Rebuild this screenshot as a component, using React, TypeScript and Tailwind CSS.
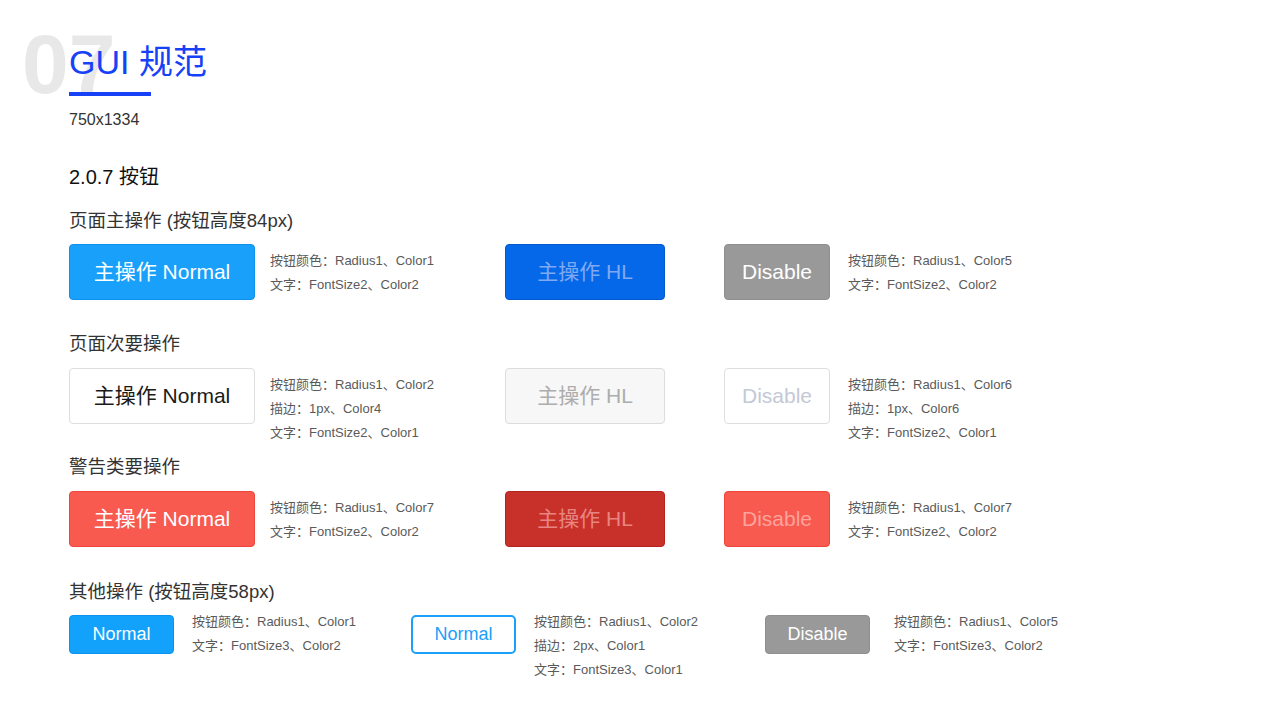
import React from "react";

const FONT = { fontFamily: '"Liberation Sans", "Noto Sans CJK SC", sans-serif' };

function Desc({ lines }: { lines: string[] }) {
  return (
    <div className="text-[13px] leading-[24px] text-[#5a5a5a] whitespace-nowrap">
      {lines.map((l) => (
        <div key={l}>{l}</div>
      ))}
    </div>
  );
}

export default function App() {
  return (
    <div className="w-[1280px] h-[720px] bg-white relative overflow-hidden" style={FONT}>
      <div className="absolute left-[22px] top-[22px] text-[84px] leading-none font-bold text-[#e8e8e8] select-none">
        07
      </div>
      <div className="relative pl-[69px] pt-[40px]">
        <div className="text-[34px] leading-[44px] text-[#1741f7]">GUI 规范</div>
        <div className="mt-[8px] h-[4px] w-[82px] bg-[#1741f7]" />
        <div className="mt-[12px] text-[16px] leading-[24px] text-[#333]">750x1334</div>
        <div className="mt-[31px] text-[20px] leading-[28px] text-[#111]">2.0.7 按钮</div>

        <div className="mt-[17px] text-[18.5px] leading-[26px] text-[#333]">页面主操作 (按钮高度84px)</div>
        <div className="mt-[10px] flex items-start">
          <div className="w-[436px] flex items-start gap-[15px]">
            <div className="w-[186px] h-[56px] rounded-[4px] bg-[#18a0fb] border border-[#0e91ee] flex items-center justify-center text-[21px] text-white">
              主操作 Normal
            </div>
            <div className="pt-[5px]">
              <Desc lines={["按钮颜色：Radius1、Color1", "文字：FontSize2、Color2"]} />
            </div>
          </div>
          <div className="w-[219px]">
            <div className="w-[160px] h-[56px] rounded-[4px] bg-[#0568e8] border border-[#0459d0] flex items-center justify-center text-[21px] text-[#7fa9f2]">
              主操作 HL
            </div>
          </div>
          <div className="flex items-start gap-[18px]">
            <div className="w-[106px] h-[56px] rounded-[4px] bg-[#999999] border border-[#8f8f8f] flex items-center justify-center text-[21px] text-white">
              Disable
            </div>
            <div className="pt-[5px]">
              <Desc lines={["按钮颜色：Radius1、Color5", "文字：FontSize2、Color2"]} />
            </div>
          </div>
        </div>

        <div className="mt-[31px] text-[18.5px] leading-[26px] text-[#333]">页面次要操作</div>
        <div className="mt-[11px] flex items-start">
          <div className="w-[436px] flex items-start gap-[15px]">
            <div className="w-[186px] h-[56px] rounded-[4px] bg-white border border-[#dedede] flex items-center justify-center text-[21px] text-[#1a1a1a]">
              主操作 Normal
            </div>
            <div className="pt-[5px]">
              <Desc lines={["按钮颜色：Radius1、Color2", "描边：1px、Color4", "文字：FontSize2、Color1"]} />
            </div>
          </div>
          <div className="w-[219px]">
            <div className="w-[160px] h-[56px] rounded-[4px] bg-[#f7f7f7] border border-[#dcdcdc] flex items-center justify-center text-[21px] text-[#adadad]">
              主操作 HL
            </div>
          </div>
          <div className="flex items-start gap-[18px]">
            <div className="w-[106px] h-[56px] rounded-[4px] bg-white border border-[#dedede] flex items-center justify-center text-[21px] text-[#c3c9d6]">
              Disable
            </div>
            <div className="pt-[5px]">
              <Desc lines={["按钮颜色：Radius1、Color6", "描边：1px、Color6", "文字：FontSize2、Color1"]} />
            </div>
          </div>
        </div>

        <div className="mt-[9px] text-[18.5px] leading-[26px] text-[#333]">警告类要操作</div>
        <div className="mt-[11px] flex items-start">
          <div className="w-[436px] flex items-start gap-[15px]">
            <div className="w-[186px] h-[56px] rounded-[4px] bg-[#f85a50] border border-[#f0453b] flex items-center justify-center text-[21px] text-white">
              主操作 Normal
            </div>
            <div className="pt-[5px]">
              <Desc lines={["按钮颜色：Radius1、Color7", "文字：FontSize2、Color2"]} />
            </div>
          </div>
          <div className="w-[219px]">
            <div className="w-[160px] h-[56px] rounded-[4px] bg-[#c8302a] border border-[#b8221d] flex items-center justify-center text-[21px] text-[#e98580]">
              主操作 HL
            </div>
          </div>
          <div className="flex items-start gap-[18px]">
            <div className="w-[106px] h-[56px] rounded-[4px] bg-[#f85a50] border border-[#f0453b] flex items-center justify-center text-[21px] text-[#fca39d]">
              Disable
            </div>
            <div className="pt-[5px]">
              <Desc lines={["按钮颜色：Radius1、Color7", "文字：FontSize2、Color2"]} />
            </div>
          </div>
        </div>

        <div className="mt-[32px] text-[18.5px] leading-[26px] text-[#333]">其他操作 (按钮高度58px)</div>
        <div className="mt-[10px] flex items-start">
          <div className="w-[342px] flex items-start gap-[18px]">
            <div className="w-[105px] h-[39px] rounded-[4px] bg-[#12a1fb] border border-[#0d93ee] flex items-center justify-center text-[18px] text-white">
              Normal
            </div>
            <div className="-mt-[5px]">
              <Desc lines={["按钮颜色：Radius1、Color1", "文字：FontSize3、Color2"]} />
            </div>
          </div>
          <div className="w-[354px] flex items-start gap-[18px]">
            <div className="w-[105px] h-[39px] rounded-[5px] bg-white border-2 border-[#1a9ffb] flex items-center justify-center text-[18px] text-[#1a9ffb]">
              Normal
            </div>
            <div className="-mt-[5px]">
              <Desc lines={["按钮颜色：Radius1、Color2", "描边：2px、Color1", "文字：FontSize3、Color1"]} />
            </div>
          </div>
          <div className="flex items-start gap-[24px]">
            <div className="w-[105px] h-[39px] rounded-[4px] bg-[#999999] border border-[#8f8f8f] flex items-center justify-center text-[18px] text-white">
              Disable
            </div>
            <div className="-mt-[5px]">
              <Desc lines={["按钮颜色：Radius1、Color5", "文字：FontSize3、Color2"]} />
            </div>
          </div>
        </div>
      </div>
    </div>
  );
}
